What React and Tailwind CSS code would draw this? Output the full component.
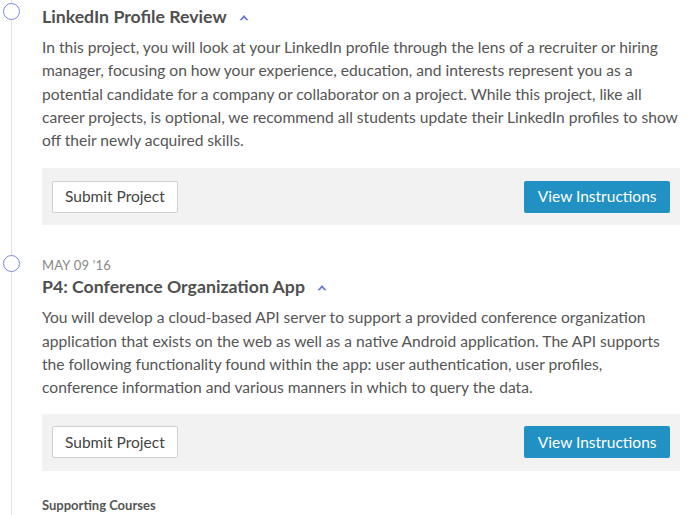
import React from "react";

const items = [
  {
    title: "LinkedIn Profile Review",
    lines: [
      "In this project, you will look at your LinkedIn profile through the lens of a recruiter or hiring",
      "manager, focusing on how your experience, education, and interests represent you as a",
      "potential candidate for a company or collaborator on a project. While this project, like all",
      "career projects, is optional, we recommend all students update their LinkedIn profiles to show",
      "off their newly acquired skills.",
    ],
  },
  {
    date: "MAY 09 '16",
    title: "P4: Conference Organization App",
    lines: [
      "You will develop a cloud-based API server to support a provided conference organization",
      "application that exists on the web as well as a native Android application. The API supports",
      "the following functionality found within the app: user authentication, user profiles,",
      "conference information and various manners in which to query the data.",
    ],
  },
];

function Caret() {
  return (
    <svg width="10" height="7" viewBox="0 0 10 7" className="ml-[12px] mt-[1px]">
      <path d="M0.5 6.2 L5 1 L9.5 6.2 L7.2 6.2 L5 3.8 L2.8 6.2 Z" fill="#6a76d8" />
    </svg>
  );
}

export default function App() {
  return (
    <div className="w-[700px] h-[515px] overflow-hidden bg-white font-['Lato',sans-serif] text-[#555]">
      <div className="ml-[11px] border-l border-[#e2e2e2] pl-[30px] pr-[20px]">
        {items.map((it, i) => (
          <div key={i} className={i === 0 ? "pt-[5px] pb-[32px]" : "pb-[26px]"}>
            <div className="relative">
              <span
                className={
                  "absolute left-[-39px] w-[17px] h-[17px] rounded-full border border-[#7b86e0] bg-white " +
                  (it.date ? "top-[-2px]" : "top-[-2px]")
                }
              />
              {it.date && (
                <div className="text-[13px] leading-[16px] text-[#888] tracking-[0.2px] mb-[2px]">{it.date}</div>
              )}
              <div className="flex items-center h-[24px]">
                <h2 className="text-[17.7px] font-bold text-[#4f4f4f]">{it.title}</h2>
                <Caret />
              </div>
            </div>
            <p className="mt-[7px] text-[15.6px] leading-[23.3px] whitespace-nowrap">
              {it.lines.map((l, j) => (
                <React.Fragment key={j}>
                  {l}
                  {j < it.lines.length - 1 && <br />}
                </React.Fragment>
              ))}
            </p>
            <div className={(i === 0 ? "mt-[16px]" : "mt-[14px]") + " h-[57px] bg-[#f2f2f2] flex justify-between items-center px-[10px]"}>
              <button className="h-[32px] px-[12px] bg-white border border-[#cfcfcf] rounded-[2px] text-[15.5px] text-[#444]">
                Submit Project
              </button>
              <button className="h-[32px] px-[13.5px] bg-[#2190c3] rounded-[2px] text-[15.5px] text-white">
                View Instructions
              </button>
            </div>
          </div>
        ))}
        <div className="text-[13px] leading-[16px] font-bold text-[#555] pb-[10px]">Supporting Courses</div>
      </div>
    </div>
  );
}
